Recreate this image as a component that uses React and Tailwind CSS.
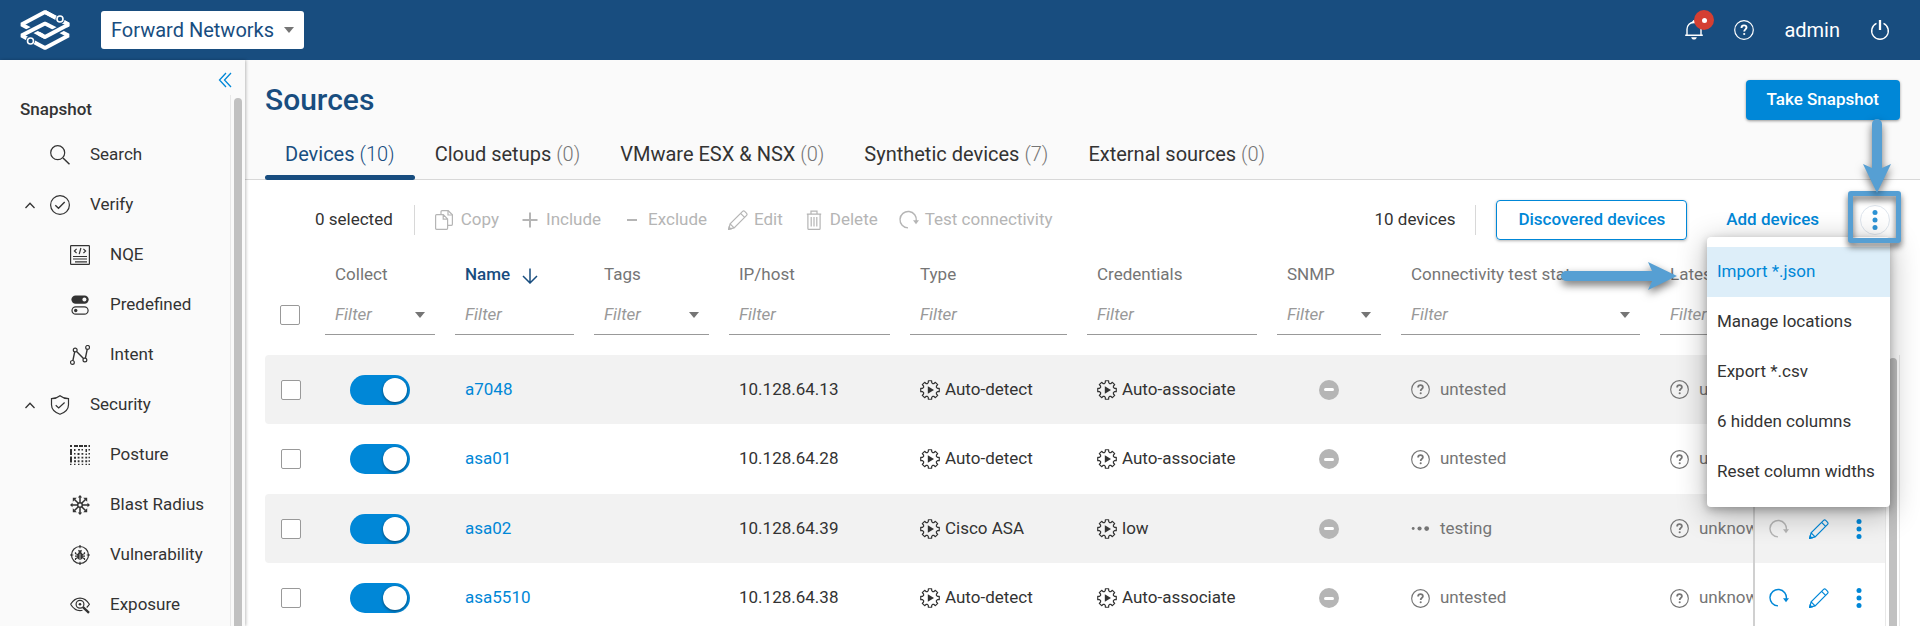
import { useState } from 'react'
import clsx from 'clsx'

const Icon = ({ size = 20, className, children, ...rest }) => (
  <svg width={size} height={size} viewBox="0 0 20 20" fill="none" stroke="currentColor" strokeWidth="1.2"
    className={clsx('shrink-0', className)} aria-hidden="true" {...rest}>
    {children}
  </svg>
)

// outline of a cog with 8 teeth, centred on 10,10
const COG = Array.from({ length: 8 }, (_, i) => {
  const at = (deg, r) => {
    const a = ((i * 45 + deg) * Math.PI) / 180
    return `${(10 + r * Math.sin(a)).toFixed(2)} ${(10 - r * Math.cos(a)).toFixed(2)}`
  }
  return `${at(-13, 7.6)} L${at(-10, 9.4)} L${at(10, 9.4)} L${at(13, 7.6)} L${at(22.5, 6.9)}`
}).join(' L')

const SearchIcon = () => <Icon><circle cx="7.7" cy="7.7" r="7" /><path d="M13 13l6.5 6.3" strokeWidth="1.5" /></Icon>
const VerifyIcon = () => <Icon><circle cx="10" cy="10" r="9.4" /><path d="M5.3 10.2l3.2 3 6.2-6.1" strokeWidth="1.4" /></Icon>
const NqeIcon = () => (
  <Icon>
    <rect x=".6" y=".6" width="18.8" height="18.8" rx=".6" />
    <path d="M6.6 3.9L4.4 6l2.2 2.1M13.4 3.9L15.6 6l-2.2 2.1M10.9 3L9.2 9.2" />
    <path d="M3 11.5h14M3 14h14M5 16.8h12" />
  </Icon>
)
const PredefinedIcon = () => (
  <Icon>
    <rect x="1.4" y=".4" width="17.3" height="8.4" rx="4.2" fill="currentColor" stroke="none" />
    <circle cx="14.4" cy="4.6" r="2" fill="#fafafa" stroke="none" />
    <rect x="2" y="11.8" width="16.1" height="7.4" rx="3.7" />
    <circle cx="5.7" cy="15.5" r="1.7" fill="currentColor" stroke="none" />
  </Icon>
)
const IntentIcon = () => (
  <Icon>
    <circle cx="2.4" cy="17.4" r="1.9" /><circle cx="5.2" cy="5" r="1.9" />
    <circle cx="14.9" cy="15" r="1.9" /><circle cx="17.6" cy="2.4" r="1.9" />
    <path d="M2.9 15.5L4.7 6.9M6.6 6.4l6.9 7.2M15.4 13.1l1.8-8.8" strokeWidth="1.4" />
  </Icon>
)
const SecurityIcon = () => (
  <Icon>
    <path d="M10 .7c2.3 1.9 5.1 2.9 8.5 3v6.1c0 4.7-3.7 7.8-8.5 9.500-4.800-1.700-8.500-4.800-8.500-9.500V3.700c3.400-.1 6.200-1.100 8.500-3z" />
    <path d="M5.700 10.200l3 2.800 5.900-5.500" />
  </Icon>
)
const PostureIcon = () => (
  <Icon stroke="none" fill="currentColor">
    <path d="M0 0h2v2H0zM4 0h4v2H4zM9 0h4v2H9zM14 0h3v2h-3zM18.500 0H20v2h-1.500zM0 4h2v6H0zM0 11.500h2v6H0zM0 18.700h1.500V20H0zM4 4h1.500v2H4zM8 4h2v1.500H8zM11.500 4h1.500v1.500h-1.500zM15.500 4H17v3h-1.500zM18.500 4H20v1.500h-1.500z" />
    <path d="M4 8h1.500v1.500H4zM7.500 8h2v2h-2zM11.500 8h1.800v1.800h-1.800zM15.500 8.500H17V10h-1.500zM18.500 8H20v1.500h-1.500zM4 11.700h2v2H4zM7.700 11.700h1.800v1.800H7.700zM11.500 11.700h1.800v1.800h-1.800zM15.300 11.700h1.900v1.800h-1.900zM18.500 11.700H20v1.500h-1.500z" />
    <path d="M4 15.300h2v1.900H4zM7.700 15.300h1.800v1.900H7.700zM11.500 15.300h1.800v1.900h-1.800zM15.300 15.300h1.900v1.900h-1.900zM18.500 15.300H20v1.500h-1.500zM4 18.700h1.500V20H4zM8 18.700h1.500V20H8zM11.700 18.700h1.500V20h-1.500zM15.500 18.700H17V20h-1.500zM18.500 18.700H20V20h-1.500z" />
  </Icon>
)
const BlastIcon = () => (
  <Icon>
    <circle cx="10" cy="10" r="2.300" strokeWidth="1.500" />
    <path d="M10 7.500V2M10 12.500V18M7.500 10H2M12.500 10H18M8.300 8.300L4.500 4.500M11.700 8.300l3.800-3.800M8.300 11.700l-3.800 3.800M11.700 11.700l3.800 3.800" strokeWidth="1.500" />
    <path d="M7.800 2.500h4.400L10 0zM7.800 17.500h4.400L10 20zM2.500 7.800v4.400L0 10zM17.500 7.800v4.400L20 10zM2.800 2.800h4L2.800 6.800zM17.200 2.800h-4l4 4zM2.800 17.200h4l-4-4zM17.200 17.200h-4l4-4z" fill="currentColor" stroke="none" />
  </Icon>
)
const VulnerabilityIcon = () => (
  <Icon>
    <circle cx="10" cy="10" r="8.500" />
    <path d="M10 0v3.300M10 16.700V20M0 10h3.300M16.700 10H20" />
    <ellipse cx="10" cy="11" rx="2.700" ry="3.800" fill="currentColor" stroke="none" />
    <circle cx="10" cy="6.800" r="1.500" fill="currentColor" stroke="none" />
    <path d="M5.500 7.200v1.500l2.700 1M14.500 7.200v1.500l-2.700 1M5 11.200h10M5.500 15v-1.400l2.500-1.100M14.500 15v-1.400L12 12.500M8.500 5l.8 1M11.500 5l-.8 1" />
    <path d="M10 8.800v5.500" stroke="#fafafa" strokeWidth=".7" />
  </Icon>
)
const ExposureIcon = () => (
  <Icon>
    <path d="M.6 9.300C3 5.500 6.300 3.100 10 3.100s7 2.400 9.400 6.200c-.8 1.300-1.700 2.300-2.700 3.200M12.500 15.300c-.8.300-1.700.4-2.500.4-3.700 0-7-2.500-9.400-6.400" />
    <circle cx="10" cy="9.200" r="3.900" />
    <path d="M13 12.200l6 5.700" strokeWidth="2.400" />
    <circle cx="10" cy="9.200" r="1.300" fill="currentColor" stroke="none" />
  </Icon>
)
const CopyIcon = () => (
  <Icon>
    <path d="M6 4.500V1.700c0-.6.4-1 1-1h6.200l4.200 4v9.600c0 .6-.4 1-1 1H13" />
    <path d="M13 .8V5h4.300M1.600 4.700h6.700l4.300 4.200v9.400c0 .6-.4 1-1 1h-10c-.6 0-1-.4-1-1V5.700c0-.6.4-1 1-1zM8.200 4.800v4.300h4.300" />
  </Icon>
)
const PlusIcon = () => <Icon><path d="M10 2.500v15M2.500 10h15" strokeWidth="2" /></Icon>
const MinusIcon = () => <Icon><path d="M5 10h10" strokeWidth="2" /></Icon>
const EditIcon = () => (
  <Icon>
    <path d="M.8 19.200l1.300-5.300L14.600 1.400c.6-.6 1.500-.6 2.100 0l1.900 1.900c.6.600.6 1.500 0 2.100L6.100 17.900zM2.100 13.900l4 4M12.600 3.400l4 4" />
    <path d="M.6 19.400l.5-2.300 1.800 1.800z" fill="currentColor" />
  </Icon>
)
const TrashIcon = () => (
  <Icon>
    <path d="M2.800 4.200h14.400M7 4V1.200h6V4M3.900 4.200v14.200c0 .5.400.9.900.9h10.400c.5 0 .9-.4.9-.9V4.200M7.200 7v9.500M10 7v9.500M12.800 7v9.500" />
  </Icon>
)
const TestIcon = () => (
  <Icon>
    <path d="M9 17.900A8.200 8.200 0 1 1 17.300 11" strokeWidth="1.400" />
    <path d="M14 10.300h6L17 14.300z" fill="currentColor" stroke="none" />
  </Icon>
)
const HelpIcon = ({ size }) => (
  <Icon size={size}>
    <circle cx="10" cy="10" r="9.300" />
    <path d="M7.500 7.900c0-1.500 1-2.500 2.500-2.500s2.500.9 2.500 2.200c0 1.700-2.300 2-2.300 4" strokeWidth="1.900" />
    <circle cx="10.200" cy="14" r="1.100" fill="currentColor" stroke="none" />
  </Icon>
)
const CogIcon = () => (
  <Icon>
    <path d={`M${COG}z`} strokeLinejoin="round" />
    <path d="M7.800 6.300v7.400l6.200-3.700z" fill="currentColor" stroke="none" />
  </Icon>
)
const DotsIcon = () => (
  <Icon size={19} stroke="none" fill="currentColor">
    <circle cx="2.300" cy="10" r="1.500" /><circle cx="9" cy="10" r="2.200" /><circle cx="16.500" cy="10" r="2.500" />
  </Icon>
)
const KebabIcon = () => (
  <Icon stroke="none" fill="currentColor">
    <circle cx="10" cy="2.500" r="2.500" /><circle cx="10" cy="10" r="2.500" /><circle cx="10" cy="17.500" r="2.500" />
  </Icon>
)
const Caret = ({ className }) => (
  <svg width="10" height="6" viewBox="0 0 10 6" fill="#757575" className={className} aria-hidden="true"><path d="M0 0h10L5 6z" /></svg>
)

// two interlaced rhombuses, each with a node on one edge
const Logo = () => (
  <svg width="50" height="42" viewBox="0 0 50 42" fill="none" stroke="#fff" strokeWidth="3.800" strokeLinejoin="bevel" aria-label="Forward Networks">
    <path d="M25 3L1.500 15.500 25 28 48.500 15.500z" />
    <path d="M25 14.500L1.500 26.500" stroke="#184d7f" strokeWidth="6.500" />
    <path d="M25 14.500L1.500 26.500 25 39 48.500 26.500z" />
    <path d="M46 17L25 28" stroke="#184d7f" strokeWidth="6.500" />
    <path d="M25 3l23.500 12.500L25 28l-6-3.200" />
    <circle cx="40" cy="10.500" r="4.600" fill="#184d7f" stroke="none" />
    <circle cx="10.500" cy="31.500" r="4.600" fill="#184d7f" stroke="none" />
    <circle cx="40" cy="10" r="3" fill="#184d7f" strokeWidth="1.600" />
    <circle cx="10.500" cy="32" r="3" fill="#184d7f" strokeWidth="1.600" />
  </svg>
)

const NAV = [
  { label: 'Search', icon: SearchIcon },
  { label: 'Verify', icon: VerifyIcon, open: true },
  { label: 'NQE', icon: NqeIcon, child: true },
  { label: 'Predefined', icon: PredefinedIcon, child: true },
  { label: 'Intent', icon: IntentIcon, child: true },
  { label: 'Security', icon: SecurityIcon, open: true },
  { label: 'Posture', icon: PostureIcon, child: true },
  { label: 'Blast Radius', icon: BlastIcon, child: true },
  { label: 'Vulnerability', icon: VulnerabilityIcon, child: true },
  { label: 'Exposure', icon: ExposureIcon, child: true },
]

const TABS = [
  { label: 'Devices', count: 10 },
  { label: 'Cloud setups', count: 0 },
  { label: 'VMware ESX & NSX', count: 0 },
  { label: 'Synthetic devices', count: 7 },
  { label: 'External sources', count: 0 },
]

const BULK_ACTIONS = [
  { label: 'Copy', icon: CopyIcon },
  { label: 'Include', icon: PlusIcon },
  { label: 'Exclude', icon: MinusIcon },
  { label: 'Edit', icon: EditIcon },
  { label: 'Delete', icon: TrashIcon },
  { label: 'Test connectivity', icon: TestIcon },
]

const COLUMNS = [
  { label: 'Collect', select: true, width: 'w-[130px]' },
  { label: 'Name', sorted: true, width: 'w-[139px]' },
  { label: 'Tags', select: true, width: 'w-[135px]' },
  { label: 'IP/host', width: 'w-[181px]' },
  { label: 'Type', width: 'w-[177px]' },
  { label: 'Credentials', width: 'w-[190px]' },
  { label: 'SNMP', select: true, width: 'w-[124px]' },
  { label: 'Connectivity test status', select: true, width: 'w-[259px]' },
  { label: 'Latest collection status', select: true, width: '' },
]

const DEVICES = [
  { name: 'a7048', ip: '10.128.64.13', type: 'Auto-detect', credentials: 'Auto-associate', status: 'untested' },
  { name: 'asa01', ip: '10.128.64.28', type: 'Auto-detect', credentials: 'Auto-associate', status: 'untested' },
  { name: 'asa02', ip: '10.128.64.39', type: 'Cisco ASA', credentials: 'low', status: 'testing' },
  { name: 'asa5510', ip: '10.128.64.38', type: 'Auto-detect', credentials: 'Auto-associate', status: 'untested' },
]

const MENU = ['Import *.json', 'Manage locations', 'Export *.csv', '6 hidden columns', 'Reset column widths']

function Header() {
  return (
    <header className="flex h-[60px] shrink-0 items-center bg-[#184d7f] pl-5 pr-[30px] text-white">
      <Logo />
      <div className="relative ml-[31px] flex items-center">
        <select aria-label="Network" className="h-[38px] w-[203px] appearance-none rounded-[3px] bg-white pl-[10px] text-xl text-[#184d7f]">
          <option>Forward Networks</option>
        </select>
        <Caret className="pointer-events-none absolute right-[10px]" />
      </div>
      <div className="ml-auto flex items-center gap-[30px]">
        <button className="relative" aria-label="Notifications">
          <Icon strokeWidth="1.400">
            <path d="M1.200 15.300h17.600M3 15V9.300a7 7 0 0 1 14 0V15" />
            <path d="M8.500 2.500L10 .5l1.500 2z" fill="currentColor" />
            <path d="M7.200 17.200h5.600c-.4 1.500-1.300 2.300-2.800 2.300s-2.400-.8-2.800-2.300z" fill="currentColor" stroke="none" />
          </Icon>
          <span className="absolute -right-[10px] -top-[10px] flex size-5 items-center justify-center rounded-full bg-[#d43f32]">
            <span className="size-[5px] rounded-full bg-white" />
          </span>
        </button>
        <button aria-label="Help"><HelpIcon /></button>
        <button className="text-xl">admin</button>
        <button aria-label="Log out">
          <Icon>
            <path d="M6.500 3.400a8.300 8.300 0 1 0 7 0" strokeWidth="1.400" />
            <path d="M10 0v10" strokeWidth="2.300" />
          </Icon>
        </button>
      </div>
    </header>
  )
}

function Sidebar() {
  return (
    <aside className="relative z-10 flex w-[245px] shrink-0 flex-col bg-[#fafafa] shadow-[1px_0_3px_rgba(0,0,0,0.25)]">
      <div className="flex h-[35px] shrink-0 items-center justify-end pr-[13px] pt-1 text-[#0087d7]">
        <button aria-label="Collapse menu">
          <svg width="14" height="16" viewBox="0 0 14 16" fill="none" stroke="currentColor" strokeWidth="1.300">
            <path d="M8 1L1.500 8 8 15M13 1L6.500 8l6.500 7" />
          </svg>
        </button>
      </div>
      <div className="flex min-h-0 flex-1">
        <nav className="flex-1 overflow-hidden">
          <h2 className="mb-[7px] pl-5 text-[17px] leading-7 font-medium">Snapshot</h2>
          {NAV.map(({ label, icon: NavIcon, open, child }) => (
            <a key={label} href="#" className={clsx('flex h-[50px] items-center', child ? 'pl-[70px]' : 'pl-[25px]')}>
              {!child && (
                <span className="w-[25px]">
                  {open && (
                    <svg width="10" height="7" viewBox="0 0 10 7" fill="none" stroke="currentColor" strokeWidth="1.300"><path d="M.5 6L5 1.200 9.500 6" /></svg>
                  )}
                </span>
              )}
              <NavIcon />
              <span className="ml-5 pb-0.5">{label}</span>
            </a>
          ))}
        </nav>
        <div className="w-[15px] border-l border-[#e8e8e8] px-[3px] pt-[3px]">
          <div className="h-full w-2 rounded-t-full bg-[#c1c1c1]" />
        </div>
      </div>
    </aside>
  )
}

function MoreMenu() {
  return (
    <div className="relative ml-5">
      <button aria-label="More actions" aria-expanded="true"
        className="flex size-[30px] items-center justify-center rounded-full border border-[#dfe6ee] text-[#2e93d5]">
        <KebabIcon />
      </button>
      <ul className="absolute top-8 right-0 z-20 w-[183px] rounded-[4px] bg-white py-[10px] shadow-[0_6px_30px_rgba(0,0,0,0.3),0_3px_8px_rgba(0,0,0,0.25)]">
        {MENU.map((item, i) => (
          <li key={item}>
            <button className={clsx('h-[50px] w-full px-[10px] pb-0.5 text-left whitespace-nowrap', i === 0 && 'bg-[#ddeef9] text-[#0087d7]')}>{item}</button>
          </li>
        ))}
      </ul>

      {/* callouts */}
      <div className="pointer-events-none absolute -top-[14px] -right-[11px] z-30 h-[52px] w-[53px] rounded-[3px] border-5 border-[#569fd3] drop-shadow-[0_4px_3px_rgba(0,0,0,0.6)]" />
      <svg width="30" height="75" viewBox="0 0 30 75" fill="#569fd3"
        className="pointer-events-none absolute -top-[86px] -right-[2px] z-30 drop-shadow-[0_4px_4px_rgba(0,0,0,0.55)]">
        <path d="M10 5a5 5 0 0 1 10 0v44l9-4-14 29L1 45l9 4z" />
      </svg>
      <svg width="117" height="30" viewBox="0 0 117 30" fill="#569fd3"
        className="pointer-events-none absolute top-[56px] right-[212px] z-30 drop-shadow-[0_4px_4px_rgba(0,0,0,0.55)]">
        <path d="M5 10h86l-4-9 29 14-29 14 4-9H5a5 5 0 0 1 0-10z" />
      </svg>
    </div>
  )
}

function Toolbar({ selected }) {
  return (
    <div className="flex h-20 shrink-0 items-center pl-[50px] pr-[10px] whitespace-nowrap">
      <span className="pb-0.5">{selected} selected</span>
      <div className="ml-[21px] flex h-[30px] items-center gap-[21px] border-l border-[#d8d8d8] pl-5 text-[#b5b5b5]">
        {BULK_ACTIONS.map(({ label, icon: ActionIcon }) => (
          <button key={label} disabled className="flex items-center gap-[6px]"><ActionIcon /><span className="pb-0.5">{label}</span></button>
        ))}
      </div>
      <span className="ml-auto pb-0.5">10 devices</span>
      <div className="ml-5 h-[30px] border-l border-[#d8d8d8]" />
      <button className="ml-5 h-10 rounded-[4px] border border-[#0087d7] px-[21px] pb-0.5 font-medium text-[#0087d7] shadow-[0_1px_3px_rgba(0,0,0,0.3)]">Discovered devices</button>
      <button className="ml-[18px] h-10 px-[21px] pb-0.5 font-medium text-[#0087d7]">Add devices</button>
      <MoreMenu />
    </div>
  )
}

function FilterField({ column }) {
  const look = 'h-10 w-full appearance-none border-b border-[#999] bg-transparent pb-0.5 pl-[10px] italic text-[#999] placeholder:text-[#999]'
  if (!column.select) return <input type="text" placeholder="Filter" aria-label={`Filter ${column.label}`} className={look} />
  return (
    <div className="relative flex items-center">
      <select aria-label={`Filter ${column.label}`} className={look}><option>Filter</option></select>
      <Caret className="pointer-events-none absolute right-[10px]" />
    </div>
  )
}

const box = 'block mx-auto size-5 appearance-none rounded-[2px] border border-[#999] bg-white checked:bg-[#0087d7]'

function DeviceTable({ picked, onPick }) {
  return (
    <div className="flex min-h-0 flex-1 overflow-hidden">
      <div className="min-w-0 flex-1">
        <table className="w-full table-fixed border-separate border-spacing-0 text-left">
          <colgroup>
            <col className="w-[50px]" />
            {COLUMNS.map((c) => <col key={c.label} className={c.width} />)}
            <col className="w-[132px]" />
          </colgroup>
          <thead className="text-[#757575]">
            <tr className="h-[30px]">
              <td />
              {COLUMNS.map((c) => (
                <th key={c.label} className={clsx('overflow-hidden pb-0.5 pl-5 whitespace-nowrap', c.sorted ? 'font-medium text-[#184d7f]' : 'font-normal')}>
                  {c.label}
                  {c.sorted && (
                    <svg width="16" height="16" viewBox="0 0 16 16" fill="none" stroke="currentColor" strokeWidth="1.500" className="ml-3 inline-block">
                      <path d="M8 .5v14M1 8l7 7 7-7" />
                    </svg>
                  )}
                </th>
              ))}
              <td />
            </tr>
            <tr className="h-[65px] align-top">
              <td className="pt-[15px]"><input type="checkbox" aria-label="Select all" className={box} /></td>
              {COLUMNS.map((c) => <td key={c.label} className="px-[10px] pt-[5px]"><FilterField column={c} /></td>)}
              <td />
            </tr>
          </thead>
          <tbody>
            {DEVICES.map((d) => (
              <tr key={d.name} className="whitespace-nowrap odd:h-[69px] even:h-[70px] odd:bg-[#f2f2f2]">
                <td className="rounded-l-[4px] pl-0.5">
                  <input type="checkbox" aria-label={`Select ${d.name}`} checked={picked.includes(d.name)} onChange={() => onPick(d.name)} className={box} />
                </td>
                <td>
                  <input type="checkbox" role="switch" defaultChecked aria-label={`Collect ${d.name}`}
                    className="mx-auto flex h-[30px] w-[60px] appearance-none items-center rounded-full bg-[#b5b5b5] px-[3px] before:size-6 before:rounded-full before:bg-white before:shadow-[0_1px_3px_rgba(0,0,0,0.5)] checked:justify-end checked:bg-[#0087d7]" />
                </td>
                <td className="pb-0.5 pl-5"><a href="#" className="text-[#0087d7]">{d.name}</a></td>
                <td />
                <td className="pb-0.5 pl-5">{d.ip}</td>
                <td className="pl-5"><span className="flex items-center gap-[5px]"><CogIcon /><span className="pb-0.5">{d.type}</span></span></td>
                <td className="pl-5"><span className="flex items-center gap-[5px]"><CogIcon /><span className="pb-0.5">{d.credentials}</span></span></td>
                <td>
                  <span className="mx-auto flex size-5 items-center justify-center rounded-full bg-[#b5b5b5]">
                    <span className="h-[3px] w-[10px] rounded-full bg-white" />
                  </span>
                </td>
                <td className="pl-5 text-[#757575]">
                  <span className="flex items-center gap-[10px]">
                    {d.status === 'testing' ? <DotsIcon /> : <HelpIcon size={19} />}
                    <span className="pb-0.5">{d.status}</span>
                  </span>
                </td>
                <td className="overflow-hidden pl-5 text-[#757575]">
                  <span className="flex items-center gap-[10px]"><HelpIcon size={19} /><span className="pb-0.5">unknown</span></span>
                </td>
                <td className="border-l-2 border-[#d0d0d0] text-[#0087d7]">
                  <span className="flex items-center gap-5 pl-[14px]">
                    <button aria-label="Test connectivity" disabled={d.status === 'testing'} className="disabled:text-[#b5b5b5]"><TestIcon /></button>
                    <button aria-label="Edit"><EditIcon /></button>
                    <button aria-label="More"><KebabIcon /></button>
                  </span>
                </td>
              </tr>
            ))}
          </tbody>
        </table>
      </div>
      <div className="mt-[95px] w-[15px] border-x border-[#e8e8e8] px-[3px] pt-[3px]">
        <div className="h-full w-2 rounded-t-full bg-[#c1c1c1]" />
      </div>
    </div>
  )
}

export default function App() {
  const [tab, setTab]       = useState('Devices')
  const [picked, setPicked] = useState([])

  const togglePick = (name) => {
    setPicked((list) => (list.includes(name) ? list.filter((n) => n !== name) : [...list, name]))
  }

  return (
    <div className="flex h-dvh flex-col overflow-hidden bg-white font-[Roboto,sans-serif] text-[17px] leading-6 text-[#333]">
      <Header />
      <div className="flex min-h-0 flex-1">
        <Sidebar />
        <main className="flex min-w-0 flex-1 flex-col">
          <div className="border-b border-[#d8d8d8] bg-[#fafafa] px-5 pt-5">
            <div className="flex h-10 items-center justify-between">
              <h1 className="text-[30px] font-medium text-[#184d7f]">Sources</h1>
              <button className="h-10 rounded-[4px] bg-[#0087d7] px-[21px] pb-0.5 font-medium text-white shadow-[0_1px_3px_rgba(0,0,0,0.4)]">Take Snapshot</button>
            </div>
            <div role="tablist" className="-mb-px flex">
              {TABS.map((t) => (
                <button key={t.label} role="tab" aria-selected={tab === t.label} onClick={() => setTab(t.label)}
                  className={clsx('relative h-[60px] px-5 pt-2 text-xl', tab === t.label && 'text-[#184d7f]')}>
                  {t.label} <span className={clsx('font-light', tab !== t.label && 'text-[#757575]')}>({t.count})</span>
                  {tab === t.label && <span className="absolute inset-x-0 bottom-0 h-[5px] rounded-full bg-[#184d7f]" />}
                </button>
              ))}
            </div>
          </div>
          <div className="flex min-h-0 flex-1 flex-col px-5">
            <Toolbar selected={picked.length} />
            <DeviceTable picked={picked} onPick={togglePick} />
          </div>
        </main>
      </div>
    </div>
  )
}
